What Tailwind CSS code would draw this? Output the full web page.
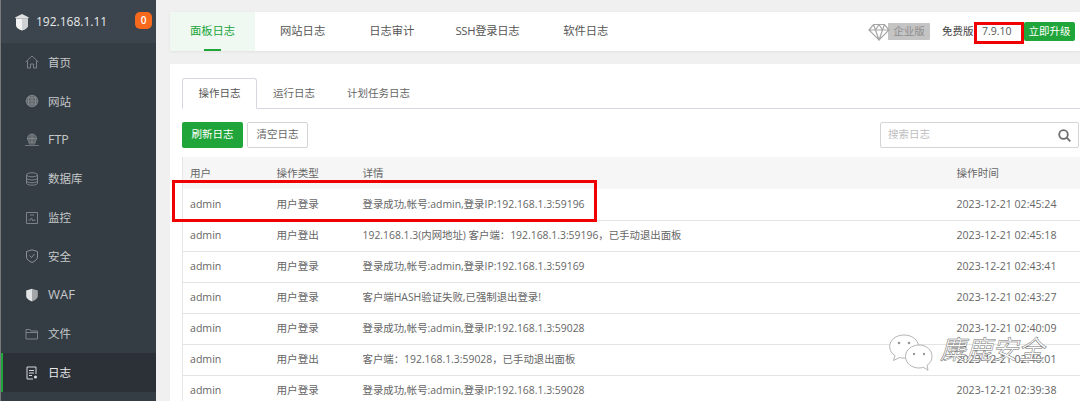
<!DOCTYPE html>
<html lang="zh-CN">
  <head>
    <meta charset="UTF-8" />
    <title>面板日志</title>
    <script src="https://cdn.jsdelivr.net/npm/@tailwindcss/browser@4"></script>
  </head>
  <body class="bg-[#f0f0f1] text-[#666] overflow-hidden font-['Open_Sans','Noto_Sans_CJK_SC',sans-serif]">
    <div class="relative flex h-[401px] w-[1080px] overflow-hidden">
      <!-- sidebar -->
      <aside class="w-[156px] shrink-0 h-full bg-[#353d44] border-l border-[#77797a] text-[#c5c8ca] text-[11.5px]">
        <div class="h-[43px] bg-[#3c444d] flex items-center pl-[13px] pr-[4px]">
          <svg class="w-[16px] h-[18px] mr-[6px]" viewBox="0 0 16 18"><path d="M2 5.500h12V12c0 3-3 4.500-6 5.500C5 16.500 2 15 2 12z" fill="#f2f2f2"/><path d="M8 6v11.500c3-1 6-2.500 6-5.500V6z" fill="#cfd2d4"/><path d="M1 4.500 8 1l7 3.500-1 1H2z" fill="#dfe1e2"/></svg>
          <span class="text-[#e6e8e9] text-[12px]">192.168.1.11</span>
          <span class="ml-auto -mt-[2px] w-[17px] h-[17px] rounded-[5px] bg-[#f7691d] text-white text-[10px] font-semibold flex items-center justify-center">0</span>
        </div>
        <nav>
          <a class="flex items-center h-[38.800px] pl-[24px] gap-[9px]">
            <svg class="w-[14px] h-[14px]" viewBox="0 0 14 14" fill="none" stroke="#7d8286"><path d="M.7 7 7 1l6.300 6M2.500 6v7h3V9h3v4h3V6"/></svg><span>首页</span>
          </a>
          <a class="flex items-center h-[38.800px] pl-[24px] gap-[9px]">
            <svg class="w-[14px] h-[14px]" viewBox="0 0 14 14" fill="#5f666b" stroke="#8b9094" stroke-width=".7"><circle cx="7" cy="7" r="5.800"/><path fill="none" d="M1.200 7h11.600M2 4h10M2 10h10M7 1.200v11.600M4.500 2c-1.500 3-1.500 7 0 10M9.500 2c1.500 3 1.500 7 0 10"/></svg><span>网站</span>
          </a>
          <a class="flex items-center h-[38.800px] pl-[24px] gap-[9px]">
            <svg class="w-[14px] h-[14px]" viewBox="0 0 14 14" fill="#5f666b" stroke="#8b9094" stroke-width=".7"><circle cx="7" cy="5.500" r="4.500"/><path fill="none" d="M2.500 5.500h9M7 1v9M4 8.500v2.500h6V8.500M0 12.500h14"/></svg><span class="text-[12.500px]">FTP</span>
          </a>
          <a class="flex items-center h-[38.800px] pl-[24px] gap-[9px]">
            <svg class="w-[14px] h-[14px]" viewBox="0 0 14 14" fill="none" stroke="#7d8286"><ellipse cx="7" cy="2.800" rx="5.500" ry="2"/><path d="M1.500 2.800v8.400c0 1.100 2.500 2 5.500 2s5.500-.9 5.500-2V2.800M1.500 6c0 1.100 2.500 2 5.500 2s5.500-.9 5.500-2M1.500 8.800c0 1.100 2.500 2 5.500 2s5.500-.9 5.500-2"/></svg><span>数据库</span>
          </a>
          <a class="flex items-center h-[38.800px] pl-[24px] gap-[9px]">
            <svg class="w-[14px] h-[14px]" viewBox="0 0 14 14" fill="none" stroke="#7d8286"><path d="M1.500 1.500h11v11h-11zM3.500 9h2l1-2 1.500 3 1-1h1.500M5 4h4"/></svg><span>监控</span>
          </a>
          <a class="flex items-center h-[38.800px] pl-[24px] gap-[9px]">
            <svg class="w-[14px] h-[14px]" viewBox="0 0 14 14" fill="none" stroke="#8b9094"><path d="M7 .8 12.500 2.500V8c0 2.500-3 4.500-5.500 5.500C4.500 12.500 1.500 10.500 1.500 8V2.500zM4.500 6.500 6.500 8.500 9.500 5"/></svg><span>安全</span>
          </a>
          <a class="flex items-center h-[38.800px] pl-[24px] gap-[9px]">
            <svg class="w-[14px] h-[14px]" viewBox="0 0 14 14"><path d="M7 .8 1.200 2.500V8c0 2.500 3 4.500 5.800 5.500z" fill="#e2e3e4"/><path d="M7 .8l5.800 1.700V8c0 2.500-3 4.500-5.800 5.500z" fill="#a3a6a8"/></svg><span class="text-[13px]">WAF</span>
          </a>
          <a class="flex items-center h-[38.800px] pl-[24px] gap-[9px]">
            <svg class="w-[14px] h-[14px]" viewBox="0 0 14 14" fill="none" stroke="#7d8286"><path d="M1 12V2.500h4l1 1.500h6.500v8z M1 5.500h11.500"/></svg><span>文件</span>
          </a>
          <a class="flex items-center h-[38.800px] pl-[22px] gap-[9px] border-l-2 border-[#20a53a] bg-[#2c3138] text-[#e8e9ea]">
            <svg class="w-[14px] h-[14px]" viewBox="0 0 14 14" fill="none" stroke="#d5d7d8"><path d="M8 13H2V1h9v7M4 4.500h5M4 7h5M4 9.500h3"/><circle cx="10.500" cy="11" r="1.600" fill="#d5d7d8" stroke="none"/></svg><span>日志</span>
          </a>
        </nav>
      </aside>

      <!-- main -->
      <main class="flex-1 min-w-0 pl-[14px] pt-[12px]">
        <!-- top bar -->
        <div class="h-[39px] bg-white flex items-center text-[11.300px] text-[#555] shadow-[0_1px_3px_rgba(0,0,0,0.06)]">
          <div class="relative w-[85px] h-full bg-[#eff8f1] text-[#20a53a] flex items-center justify-center">
            面板日志
            <span class="absolute bottom-0 left-[34px] w-[17px] h-[2px] bg-[#20a53a]"></span>
          </div>
          <span class="ml-[25px]">网站日志</span>
          <span class="ml-[44px]">日志审计</span>
          <span class="ml-[41px] tracking-[-0.3px]">SSH登录日志</span>
          <span class="ml-[44px]">软件日志</span>
          <div class="ml-auto flex items-center h-full">
            <svg class="w-[22px] h-[18px] relative z-10" viewBox="0 0 22 18" fill="#fff" stroke="#a6a6a6" stroke-width="1.200"><path d="M5.500 1.500h11L21 7 11 17 1 7zM1 7h20M7.500 7 11 17l3.500-10M5.500 1.500 7.500 7 11 1.500 14.500 7l2-5.500"/></svg>
            <span class="-ml-[2px] h-[17px] w-[42px] bg-[#c4c4c4] text-[#8d8d8d] text-[10.500px] flex items-center justify-center rounded-r-[1px]">企业版</span>
            <span class="ml-[12px] w-[32px] text-[10.500px] text-[#444]">免费版</span>
            <span class="ml-[8px] w-[40px] text-[10.500px] text-[#555]">7.9.10</span>
            <span class="ml-[2px] mr-[5px] h-[19px] w-[51px] rounded-[2px] bg-[#20a53a] text-white text-[10.500px] flex items-center justify-center">立即升级</span>
          </div>
        </div>

        <!-- content card -->
        <div class="mt-[13px] h-[400px] bg-white pl-[12px] pt-[14px]">
          <div class="flex h-[31px] border-b border-[#d8d6e3] text-[10.500px] text-[#666]">
            <span class="w-[75px] h-[31px] bg-white border border-[#d8d6e3] border-b-white rounded-t-[3px] flex items-center justify-center text-[#555]">操作日志</span>
            <span class="ml-[16px] leading-[30px]">运行日志</span>
            <span class="ml-[32px] leading-[30px]">计划任务日志</span>
          </div>

          <div class="flex items-center mt-[13px] h-[26px] text-[10.500px]">
            <button class="w-[61px] h-[26px] rounded-[2px] bg-[#20a53a] text-white">刷新日志</button>
            <button class="ml-[4px] w-[61px] h-[26px] rounded-[2px] bg-white border border-[#d5d5d5] text-[#666]">清空日志</button>
            <div class="ml-auto mr-[1px] w-[199px] h-[26px] border border-[#d5d5d5] rounded-[2px] flex items-center pl-[7px] pr-[7px] text-[#bdbdbd]">
              <span>搜索日志</span>
              <svg class="ml-auto w-[13px] h-[13px]" viewBox="0 0 13 13" fill="none" stroke="#6e6e6e" stroke-width="1.800"><circle cx="5.500" cy="5.500" r="4.300"/><path d="m8.700 8.700 3.600 3.600"/></svg>
            </div>
          </div>

          <table class="mt-[9px] w-[898px] table-fixed border-l border-[#e6e6e6] text-[10.600px] text-[#666] [&_td]:pt-[1px] [&_th]:pt-[2px] [&_td:nth-child(3)]:text-[10.400px]">
            <colgroup><col class="w-[94px]"><col class="w-[86px]"><col class="w-[594px]"><col></colgroup>
            <thead>
              <tr class="h-[32px] bg-[#f6f6f6] text-left">
                <th class="pl-[7px] font-normal">用户</th><th class="font-normal">操作类型</th><th class="font-normal">详情</th><th class="font-normal">操作时间</th>
              </tr>
            </thead>
            <tbody>
              <tr class="h-[31px] border-b border-[#e4e4e4]"><td class="pl-[7px]">admin</td><td>用户登录</td><td>登录成功,帐号:admin,登录IP:192.168.1.3:59196</td><td>2023-12-21 02:45:24</td></tr>
              <tr class="h-[31px] border-b border-[#e4e4e4]"><td class="pl-[7px]">admin</td><td>用户登出</td><td>192.168.1.3(内网地址) 客户端：192.168.1.3:59196，已手动退出面板</td><td>2023-12-21 02:45:18</td></tr>
              <tr class="h-[31px] border-b border-[#e4e4e4]"><td class="pl-[7px]">admin</td><td>用户登录</td><td>登录成功,帐号:admin,登录IP:192.168.1.3:59169</td><td>2023-12-21 02:43:41</td></tr>
              <tr class="h-[31px] border-b border-[#e4e4e4]"><td class="pl-[7px]">admin</td><td>用户登录</td><td>客户端HASH验证失败,已强制退出登录!</td><td>2023-12-21 02:43:27</td></tr>
              <tr class="h-[31px] border-b border-[#e4e4e4]"><td class="pl-[7px]">admin</td><td>用户登录</td><td>登录成功,帐号:admin,登录IP:192.168.1.3:59028</td><td>2023-12-21 02:40:09</td></tr>
              <tr class="h-[31px] border-b border-[#e4e4e4]"><td class="pl-[7px]">admin</td><td>用户登出</td><td>客户端：192.168.1.3:59028，已手动退出面板</td><td>2023-12-21 02:40:01</td></tr>
              <tr class="h-[31px] border-b border-[#e4e4e4]"><td class="pl-[7px]">admin</td><td>用户登录</td><td>登录成功,帐号:admin,登录IP:192.168.1.3:59028</td><td>2023-12-21 02:39:38</td></tr>
            </tbody>
          </table>
        </div>
      </main>

      <!-- red annotation boxes laid over the screenshot -->
      <div class="absolute left-[172px] top-[180px] w-[425px] h-[42px] border-[3px] border-[#f00000]"></div>
      <div class="absolute left-[974px] top-[22px] w-[50px] h-[22px] border-[3px] border-[#f00000]"></div>

      <!-- watermark -->
      <div class="absolute left-[889px] top-[334px] flex items-center">
        <svg class="w-[44px] h-[37px]" viewBox="0 0 44 37" fill="#fff" stroke="#b4b4b4" stroke-width="1"><path d="M15 1C7 1 .7 6 .7 12.500c0 4 2 7 5.300 9l-1.500 5 6-3c1.500.4 3 .6 4.500.6 8 0 14.500-5 14.500-11.600S23 1 15 1z"/><path d="M30 11c-7.500 0-13.500 5-13.500 11.500S22.500 34 30 34c1.500 0 3-.2 4.500-.7l4.500 3-1-5c3-2 5-5 5-8.800C43 16 37.500 11 30 11z"/><circle cx="10" cy="9" r="1.300" fill="#999" stroke="none"/><circle cx="20" cy="9" r="1.300" fill="#999" stroke="none"/><circle cx="25" cy="20" r="1.200" fill="#999" stroke="none"/><circle cx="35" cy="20" r="1.200" fill="#999" stroke="none"/></svg>
        <span class="ml-[7px] -mt-[8px] text-[26px] leading-[30px] italic text-white [-webkit-text-stroke:0.5px_#6f6f6f]">麋鹿安全</span>
      </div>
    </div>
  </body>
</html>
